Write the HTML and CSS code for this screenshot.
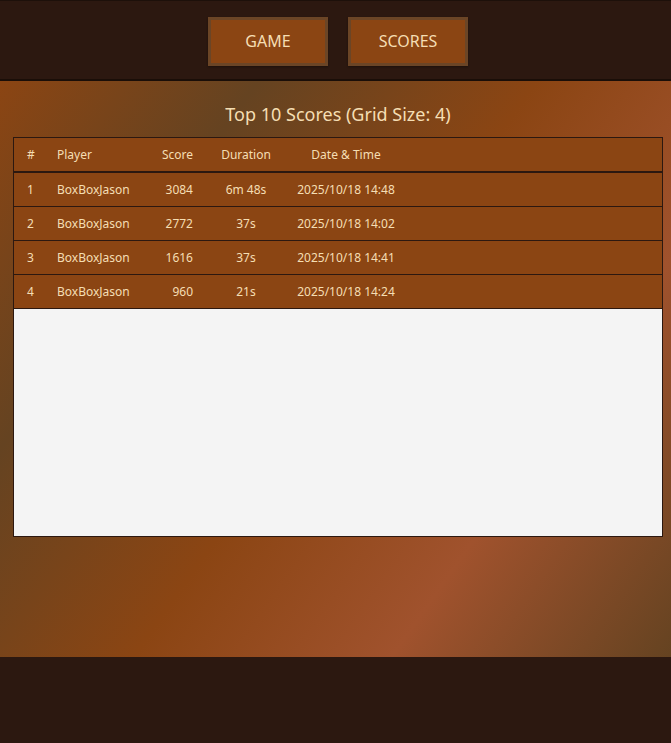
FILE: index.html
```html
<!DOCTYPE html>
<html lang="en">
<head>
<meta charset="utf-8">
<title>Scores</title>
<link rel="stylesheet" href="styles.css">
</head>
<body>
<header class="top-bar">
  <nav class="nav">
    <button class="nav-btn">GAME</button>
    <button class="nav-btn">SCORES</button>
  </nav>
</header>
<main class="main">
  <h2 class="title">Top 10 Scores (Grid Size: 4)</h2>
  <div class="score-table">
    <div class="row head">
      <div class="c-rank">#</div>
      <div class="c-player">Player</div>
      <div class="c-score">Score</div>
      <div class="c-dur">Duration</div>
      <div class="c-date">Date &amp; Time</div>
    </div>
    <div class="row">
      <div class="c-rank">1</div>
      <div class="c-player">BoxBoxJason</div>
      <div class="c-score">3084</div>
      <div class="c-dur">6m 48s</div>
      <div class="c-date">2025/10/18 14:48</div>
    </div>
    <div class="row">
      <div class="c-rank">2</div>
      <div class="c-player">BoxBoxJason</div>
      <div class="c-score">2772</div>
      <div class="c-dur">37s</div>
      <div class="c-date">2025/10/18 14:02</div>
    </div>
    <div class="row">
      <div class="c-rank">3</div>
      <div class="c-player">BoxBoxJason</div>
      <div class="c-score">1616</div>
      <div class="c-dur">37s</div>
      <div class="c-date">2025/10/18 14:41</div>
    </div>
    <div class="row">
      <div class="c-rank">4</div>
      <div class="c-player">BoxBoxJason</div>
      <div class="c-score">960</div>
      <div class="c-dur">21s</div>
      <div class="c-date">2025/10/18 14:24</div>
    </div>
  </div>
</main>
</body>
</html>
```
FILE: styles.css
```css
* { box-sizing: border-box; }

html, body {
  margin: 0;
  padding: 0;
}

body {
  background: #2c1810;
  font-family: "Noto Sans", "Open Sans", sans-serif;
  color: #f5deb3;
  height: 743px;
  overflow: hidden;
}

.top-bar {
  background: #2c1810;
  border-top: 1px solid #1d100a;
  border-bottom: 2px solid #1a0e08;
  padding: 16px 0 13px 5px;
}

.nav {
  display: flex;
  justify-content: center;
  gap: 20px;
}

.nav-btn {
  width: 120px;
  height: 49px;
  background: #8b4513;
  border: 3px solid #6b4526;
  color: #f5deb3;
  font-family: "Noto Sans", "Open Sans", sans-serif;
  font-size: 16px;
  padding: 0 0 2px;
  box-shadow: 0 1px 2px rgba(0, 0, 0, 0.35);
}

.main {
  height: 576px;
  padding: 21px 8px 0 13px;
  background: linear-gradient(125deg, #8b4513 0%, #654321 24%, #8b4513 50%, #a0522d 74%, #654321 100%);
}

.title {
  margin: 0 0 11px;
  font-size: 18px;
  line-height: 24px;
  font-weight: normal;
  text-align: center;
  color: #f5deb3;
}

.score-table {
  height: 400px;
  border: 1px solid #2c1810;
  background: #f4f4f4;
  font-size: 12px;
}

.row {
  display: grid;
  grid-template-columns: 43px 93px 46px 100px 100px 1fr;
  align-items: center;
  height: 34px;
  background: #8b4513;
  border-bottom: 1px solid #2c1810;
  color: #f5deb3;
}

.row.head {
  height: 35px;
  border-bottom: 2px solid #2c1810;
}

.c-rank { padding-left: 13px; }
.c-player { text-align: left; }
.c-score { text-align: right; padding-right: 3px; }
.c-dur { text-align: center; }
.c-date { text-align: center; white-space: nowrap; }
```
